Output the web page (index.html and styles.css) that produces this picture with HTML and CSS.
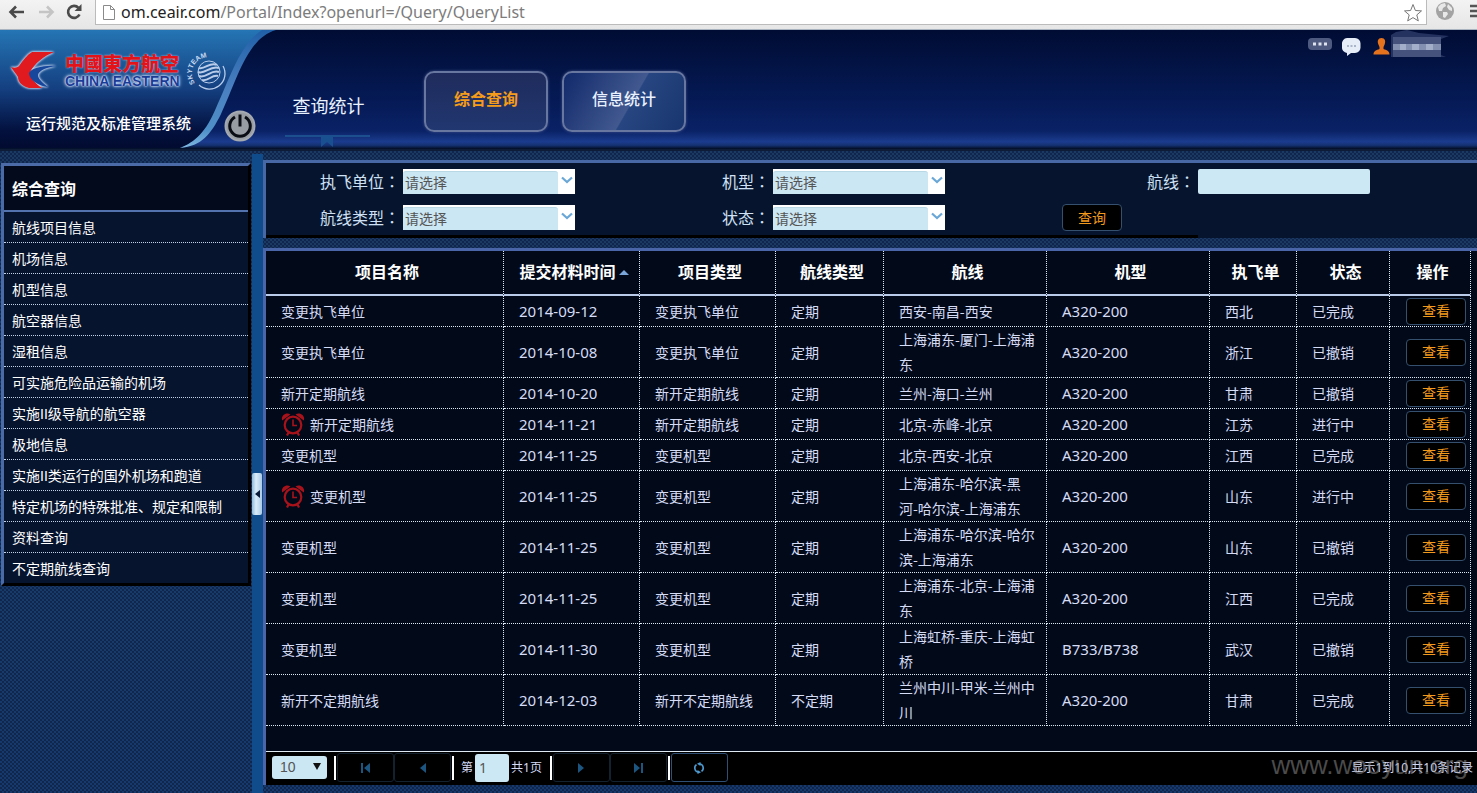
FILE: index.html
```html
<!DOCTYPE html>
<html lang="zh-CN">
<head>
<meta charset="utf-8">
<title>运行规范及标准管理系统</title>
<link rel="stylesheet" href="styles.css">
</head>
<body>
<svg width="0" height="0" class="defs" aria-hidden="true">
  <symbol id="chev" viewBox="0 0 12 8"><path d="M1 1.500l5 4.500 5-4.500" fill="none" stroke="#6aa7d6" stroke-width="2.200"/></symbol>
  <symbol id="clock" viewBox="0 0 24 24"><g fill="none" stroke="#a8121b" stroke-width="2.200"><circle cx="12" cy="13" r="8.300"/><path d="M12 7.500v6h4" stroke-width="1.600"/><path d="M7.500 20.500l-1.500 3M16.500 20.500l1.500 3"/></g><path d="M1.200 8.500C-.5 4.500 4.500-.5 9.500 2.500ZM22.800 8.500C24.500 4.500 19.500-.5 14.500 2.500Z" fill="#a8121b"/></symbol>
</svg>
<div class="chrome">
  <button class="cbtn" aria-label="后退"><svg width="18" height="14" viewBox="0 0 18 14"><path d="M16 7H3M8 1.500L2.500 7 8 12.500" fill="none" stroke="#4a4a4a" stroke-width="2.600"/></svg></button>
  <button class="cbtn" aria-label="前进"><svg width="18" height="14" viewBox="0 0 18 14"><path d="M2 7h13M10 1.500L15.500 7 10 12.500" fill="none" stroke="#c4c4c4" stroke-width="2.600"/></svg></button>
  <button class="cbtn" aria-label="刷新"><svg width="17" height="16" viewBox="0 0 17 16"><path d="M13.500 10.500A6 6 0 1 1 12.500 3.800" fill="none" stroke="#4a4a4a" stroke-width="2.600"/><path d="M15.500 0v7h-7z" fill="#4a4a4a"/></svg></button>
  <div class="address">
    <svg width="12" height="15" viewBox="0 0 12 15"><path d="M.5.5h7l4 4v10H.5zM7.500.5v4h4" fill="#fff" stroke="#8a8a8a"/></svg>
    <span class="url"><span class="host">om.ceair.com</span>/Portal/Index?openurl=/Query/QueryList</span>
    <svg class="star" width="20" height="19" viewBox="0 0 20 19"><path d="M10 1.500l2.400 6 6.100.4-4.700 4 1.500 6L10 14.600 4.700 17.900l1.500-6-4.700-4 6.100-.4z" fill="#fff" stroke="#777"/></svg>
  </div>
  <svg class="globe" width="20" height="20" viewBox="0 0 20 20"><circle cx="10" cy="10" r="9" fill="#a3a3a3"/><path d="M3 6l3-3 4-1 1 3-3 2-1 3-3 0zM13 3l4 4 0 3-3-1-2-3zM8 11l4 0 1 2-3 4-2-1z" fill="#e8e8e8"/></svg>
  <svg class="menu" width="14" height="16" viewBox="0 0 14 16"><path d="M0 3h14M0 8h14M0 13h14" stroke="#555" stroke-width="2.600"/></svg>
</div>

<header class="top">
  <div class="brand">
    <svg class="swoosh" width="280" height="119" viewBox="0 0 280 119">
      <defs>
        <linearGradient id="g1" x1="0" y1="0" x2="0" y2="1"><stop offset="0" stop-color="#2575b4"/><stop offset=".5" stop-color="#143f80"/><stop offset=".85" stop-color="#03113f"/><stop offset="1" stop-color="#020b30"/></linearGradient>
        <linearGradient id="g2" x1="0" y1="0" x2="0" y2="1"><stop offset="0" stop-color="#2060a8"/><stop offset=".5" stop-color="#4a80c0"/><stop offset=".85" stop-color="#4f90c8"/><stop offset="1" stop-color="#7fb8e0"/></linearGradient>
      </defs>
      <path d="M0 0H268C240 8 232 50 218 78C206 102 196 112 180 118H0Z" fill="url(#g1)"/>
      <path d="M276 0H262C240 14 230 48 216 78C206 102 195 112 180 118C202 116 211 104 221 84C237 50 247 8 276 0Z" fill="url(#g2)"/>
    </svg>
    <div class="logo">
      <svg class="bird" width="50" height="44" viewBox="0 0 50 44"><path d="M45 3C35 7 26 14 21 23C21 29 27 35 33 39H20C13 37 9 33 9 28C7 25 4 21 2 18C5 19 8 19 10 17C14 11 18 6 23 3Z" fill="#e01a1e"/><path d="M47 17C35 16 22 19 20 24C20 31 30 37 39 38C34 34 29 30 29 26C30 21 39 18 47 17Z" fill="#17479c"/></svg>
      <div class="logo-text"><div class="cn">中國東方航空</div><div class="en">CHINA EASTERN</div></div>
      <svg class="team" width="44" height="44" viewBox="0 0 44 44" fill="none" stroke="#b9cdea"><path id="arc" d="M9 34A15 15 0 1 1 35 15" stroke="none"/><text class="sky" fill="#c5d6ee" stroke="none"><textPath href="#arc">SKYTEAM</textPath></text><circle cx="23" cy="23" r="11" stroke-width="1"/><path d="M13 19c6 2 11-7 18-3M12 23c7 3 12-7 21-4M13 27c7 3 12-7 20-4M16 31c6 2 10-6 16-4" stroke-width="2"/><path d="M37 17A15.500 15.500 0 0 1 13 36" stroke-width="1.300"/></svg>
    </div>
    <div class="system">运行规范及标准管理系统</div>
    <button class="power" aria-label="退出"><svg width="32" height="32" viewBox="0 0 32 32"><circle cx="16" cy="16" r="15.500" fill="#a5a9b0"/><circle cx="16" cy="16" r="13.500" fill="#989ca3"/><path d="M11 7A10.300 10.300 0 1 0 21 7M16 4.500v12" fill="none" stroke="#0a0d14" stroke-width="3"/></svg></button>
  </div>
  <nav class="nav">
    <a class="section" href="#">查询统计<svg width="12" height="12" viewBox="0 0 12 12"><path d="M0 0h12v11l-6-5-6 5z" fill="#19508f"/></svg></a>
    <a class="tab on" href="#">综合查询</a>
    <a class="tab" href="#">信息统计</a>
  </nav>
  <div class="user">
    <svg width="24" height="12" viewBox="0 0 24 12"><rect width="24" height="12" rx="4" fill="#4e5a80"/><path d="M5 4.500h3v3H5zM10.500 4.500h3v3h-3zM16 4.500h3v3h-3z" fill="#dfe3ee"/></svg>
    <svg width="19" height="18" viewBox="0 0 19 18"><path d="M5 0h8a5.500 5.500 0 0 1 5.500 6v3A5.500 5.500 0 0 1 13 15H9l-4 3v-3A5.500 5.500 0 0 1 0 9V6A5.500 5.500 0 0 1 5 0z" fill="#e6edf6"/><path d="M5 7h2v2H5zM8.500 7h2v2h-2zM12 7h2v2h-2z" fill="#a9b5c8"/></svg>
    <svg width="17" height="17" viewBox="0 0 17 17"><path d="M8.500 0C12 0 13 3 11.600 6.500L10.500 9v2c3 1 6 2 6 5.500H.5C.5 13 3.500 12 6.500 11V9L5.400 6.500C4 3 5 0 8.500 0z" fill="#e5731d"/></svg>
    <svg class="mask" width="60" height="30" viewBox="0 0 60 30"><path d="M0 6L5 3 16 1 28 4 58 7 50 10V26L55 28H0Z" fill="#24325f"/><path d="M2 8h48v20H2z" fill="#45537c"/><path d="M2 15h48v6H2z" fill="#8490b0"/><path d="M9 15h6v6H9zM21 15h7v6h-7zM35 15h7v6h-7z" fill="#a3aec9"/></svg>
  </div>
</header>

<main class="body">
  <aside class="side">
    <h2>综合查询</h2>
    <ul>
      <li><a href="#">航线项目信息</a></li><li><a href="#">机场信息</a></li><li><a href="#">机型信息</a></li><li><a href="#">航空器信息</a></li><li><a href="#">湿租信息</a></li><li><a href="#">可实施危险品运输的机场</a></li><li><a href="#">实施II级导航的航空器</a></li><li><a href="#">极地信息</a></li><li><a href="#">实施II类运行的国外机场和跑道</a></li><li><a href="#">特定机场的特殊批准、规定和限制</a></li><li><a href="#">资料查询</a></li><li><a href="#">不定期航线查询</a></li>
    </ul>
  </aside>
  <div class="split"><button aria-label="收起菜单"><svg width="5" height="8" viewBox="0 0 5 8"><path d="M5 0v8L0 4z" fill="#0a1a38"/></svg></button></div>
  <section class="content">
    <form class="filter">
      <label for="f1">执飞单位<span class="colon" lang="zh-TW">：</span></label>
      <span class="sel"><select id="f1"><option>请选择</option></select><svg width="12" height="8"><use href="#chev"/></svg></span>
      <label for="f2">机型<span class="colon" lang="zh-TW">：</span></label>
      <span class="sel"><select id="f2"><option>请选择</option></select><svg width="12" height="8"><use href="#chev"/></svg></span>
      <label for="f3">航线<span class="colon" lang="zh-TW">：</span></label>
      <input class="line" id="f3" type="text">
      <label for="f4">航线类型<span class="colon" lang="zh-TW">：</span></label>
      <span class="sel"><select id="f4"><option>请选择</option></select><svg width="12" height="8"><use href="#chev"/></svg></span>
      <label for="f5">状态<span class="colon" lang="zh-TW">：</span></label>
      <span class="sel"><select id="f5"><option>请选择</option></select><svg width="12" height="8"><use href="#chev"/></svg></span>
      <button class="btn" type="button">查询</button>
    </form>
    <div class="grid">
      <table>
        <colgroup><col class="c1"><col class="c2"><col class="c2"><col class="c4"><col class="c5"><col class="c5"><col class="c7"><col class="c8"><col class="c9"></colgroup>
        <thead><tr><th>项目名称</th><th>提交材料时间<svg width="10" height="5" viewBox="0 0 10 5"><path d="M0 5l5-5 5 5z" fill="#7aa6da"/></svg></th><th>项目类型</th><th>航线类型</th><th>航线</th><th>机型</th><th>执飞单</th><th>状态</th><th>操作</th></tr></thead>
        <tbody>
          <tr><td>变更执飞单位</td><td class="n">2014-09-12</td><td>变更执飞单位</td><td>定期</td><td>西安-南昌-西安</td><td class="n">A320-200</td><td>西北</td><td>已完成</td><td><button class="btn">查看</button></td></tr>
          <tr><td>变更执飞单位</td><td class="n">2014-10-08</td><td>变更执飞单位</td><td>定期</td><td>上海浦东-厦门-上海浦东</td><td class="n">A320-200</td><td>浙江</td><td>已撤销</td><td><button class="btn">查看</button></td></tr>
          <tr><td>新开定期航线</td><td class="n">2014-10-20</td><td>新开定期航线</td><td>定期</td><td>兰州-海口-兰州</td><td class="n">A320-200</td><td>甘肃</td><td>已撤销</td><td><button class="btn">查看</button></td></tr>
          <tr><td><svg class="clock" width="24" height="24"><use href="#clock"/></svg>新开定期航线</td><td class="n">2014-11-21</td><td>新开定期航线</td><td>定期</td><td>北京-赤峰-北京</td><td class="n">A320-200</td><td>江苏</td><td>进行中</td><td><button class="btn">查看</button></td></tr>
          <tr><td>变更机型</td><td class="n">2014-11-25</td><td>变更机型</td><td>定期</td><td>北京-西安-北京</td><td class="n">A320-200</td><td>江西</td><td>已完成</td><td><button class="btn">查看</button></td></tr>
          <tr><td><svg class="clock" width="24" height="24"><use href="#clock"/></svg>变更机型</td><td class="n">2014-11-25</td><td>变更机型</td><td>定期</td><td>上海浦东-哈尔滨-黑河-哈尔滨-上海浦东</td><td class="n">A320-200</td><td>山东</td><td>进行中</td><td><button class="btn">查看</button></td></tr>
          <tr><td>变更机型</td><td class="n">2014-11-25</td><td>变更机型</td><td>定期</td><td>上海浦东-哈尔滨-哈尔滨-上海浦东</td><td class="n">A320-200</td><td>山东</td><td>已撤销</td><td><button class="btn">查看</button></td></tr>
          <tr><td>变更机型</td><td class="n">2014-11-25</td><td>变更机型</td><td>定期</td><td>上海浦东-北京-上海浦东</td><td class="n">A320-200</td><td>江西</td><td>已完成</td><td><button class="btn">查看</button></td></tr>
          <tr><td>变更机型</td><td class="n">2014-11-30</td><td>变更机型</td><td>定期</td><td>上海虹桥-重庆-上海虹桥</td><td class="n">B733/B738</td><td>武汉</td><td>已撤销</td><td><button class="btn">查看</button></td></tr>
          <tr><td>新开不定期航线</td><td class="n">2014-12-03</td><td>新开不定期航线</td><td>不定期</td><td>兰州中川-甲米-兰州中川</td><td class="n">A320-200</td><td>甘肃</td><td>已完成</td><td><button class="btn">查看</button></td></tr>
        </tbody>
      </table>
      <div class="pager">
        <span class="size"><select aria-label="每页条数"><option>10</option></select><svg width="8" height="7" viewBox="0 0 8 7"><path d="M0 0h8L4 7z" fill="#111"/></svg></span>
        <i class="sep"></i>
        <button aria-label="首页"><svg width="10" height="10" viewBox="0 0 10 10"><path d="M0 0h2v10H0zM9 0v10L3 5z" fill="#1b5580"/></svg></button>
        <button aria-label="上一页"><svg width="10" height="10" viewBox="0 0 10 10"><path d="M8 0v10L2 5z" fill="#1b5580"/></svg></button>
        <i class="sep"></i>
        <label class="page">第<input type="text" value="1" aria-label="页码">共1页</label>
        <i class="sep"></i>
        <button aria-label="下一页"><svg width="10" height="10" viewBox="0 0 10 10"><path d="M2 0v10l6-5z" fill="#1b5580"/></svg></button>
        <button aria-label="末页"><svg width="10" height="10" viewBox="0 0 10 10"><path d="M8 0h2v10H8zM1 0v10l6-5z" fill="#1b5580"/></svg></button>
        <i class="sep"></i>
        <button class="live" aria-label="刷新列表"><svg width="12" height="12" viewBox="0 0 12 12"><g fill="none" stroke="#4d9ad0" stroke-width="1.600"><path d="M3.500 2.600A4.300 4.300 0 0 0 5.500 10.300M8.500 9.400A4.300 4.300 0 0 0 6.500 1.700"/></g><path d="M7.500 0v4L4 1.700zM4.500 12V8L8 10.300z" fill="#4d9ad0"/></svg></button>
        <span class="info">显示1到10,共10条记录</span>
      </div>
    </div>
    <div class="mark">www.wooyun.org</div>
  </section>
</main>
</body>
</html>
```
FILE: styles.css
```css
* { box-sizing: border-box; }
body { margin: 0; min-height: 100vh; display: flex; flex-direction: column; font: 14px/25px "Noto Sans CJK SC", sans-serif; color: #d6dcf5; background: #16345f; overflow: hidden; }
a { color: inherit; text-decoration: none; }
button, input, select { font: inherit; margin: 0; padding: 0; border: 0; background: none; color: inherit; }
svg { flex: none; }
.defs { position: absolute; }

.chrome { height: 30px; display: flex; align-items: flex-start; background: linear-gradient(#f3f3f3, #e6e6e6); border-bottom: 1px solid #a9b3bf; }
.cbtn { width: 29px; height: 24px; padding-left: 8px; display: flex; align-items: center; }
.address { flex: 1; height: 25px; margin: 0 4px 0 8px; padding: 0 3px 0 7px; display: flex; align-items: center; gap: 6px; background: #fff; border: 1px solid #bbb; border-top: 0; }
.url { flex: 1; font: 16px/24px "Noto Sans", sans-serif; color: #7c7c7c; }
.host { color: #222; }
.globe { margin: 1px 15px 0 4px; }
.menu { margin-top: 3px; margin-right: -7px; }

.top { height: 119px; display: flex; position: relative; background: linear-gradient(#000c33, #051a56 60%, #0a2266 85%, #1b3c8e 94%, #14306f 97%, #020c22); }
.brand { width: 285px; position: relative; }
.swoosh { position: absolute; left: 0; top: 0; }
.logo { position: relative; display: flex; align-items: center; gap: 6px; padding: 19px 0 0 9px; height: 62px; }
.bird { filter: drop-shadow(0 0 1px #c9daf2) drop-shadow(0 0 1px #c9daf2); }
.logo-text { width: 117px; font-weight: bold; text-shadow: 0 0 2px #b9cdf0; }
.cn { font-size: 19px; line-height: 20px; font-weight: 900; color: #e3131a; white-space: nowrap; }
.en { margin-top: 1px; font: bold 14px/14px "Liberation Sans", sans-serif; color: #1a3c96; white-space: nowrap; text-shadow: 0 0 1px #dfe9fb, 0 0 2px #c9daf5, 0 0 3px #b9cdf0, 0 0 4px #b9cdf0; }
.team { margin-left: -2px; }
.sky { font: bold 7px "Liberation Sans", sans-serif; }
.system { position: relative; padding: 19px 0 0 26px; font-size: 15px; line-height: 24px; font-weight: 500; color: #fff; }
.power { position: absolute; left: 224px; top: 80px; width: 32px; height: 32px; }
.nav { display: flex; flex: 1; }
.section { width: 85px; height: 107px; padding: 63px 0 0 2px; margin-right: 54px; position: relative; border-bottom: 2px solid #1c4f8e; font-size: 18px; text-align: center; color: #e8f2ff; }
.section svg { position: absolute; left: 36px; top: 106px; }
.tab { width: 124px; height: 61px; margin: 41px 14px 0 0; padding-top: 13px; border: 2px solid #68779f; border-radius: 10px; font-size: 16px; font-weight: 500; text-align: center; color: #eaf1ff; background: linear-gradient(120deg, #12296b, #41598f 55%, #274580 56%, #18356f); box-shadow: 0 0 3px #40518a; }
.tab.on { color: #f59c1a; font-weight: bold; background: linear-gradient(#1f2b5c, #213770); }
.user { display: flex; align-items: flex-start; padding-top: 8px; margin-right: 26px; }
.user svg + svg { margin-left: 10px; }
.user svg + .mask { margin: -9px 0 0 1px; }
.user svg:nth-child(3) { margin-left: 12px; }

.body { flex: 1; display: flex; align-items: stretch; background: radial-gradient(circle at 1px 1px, #10264d 1px, transparent 1px) 0 0 / 4px 4px, radial-gradient(circle at 3px 3px, #10264d 1px, transparent 1px) 0 0 / 4px 4px, linear-gradient(#193a62, #183c68 60%, #16396e); border-top: 2px solid #0e1c38; }
.side { width: 250px; align-self: flex-start; margin: 12px 1px 0 1px; border: 3px solid #000; border-color: #4a6ba8 #000 #000 #4a6ba8; background: #07142e; color: #fff; font-family: "Liberation Sans", "Noto Sans CJK SC", sans-serif; }
.side h2 { margin: 0; height: 46px; padding-left: 8px; font-size: 16px; line-height: 47px; background: #020a1b; border-bottom: 2px solid #5273ae; }
.side ul { margin: 0; padding: 0; list-style: none; }
.side li { height: 31px; padding-left: 8px; line-height: 32px; border-bottom: 1px dotted #c3d2e8; }
.side li:last-child { height: 30px; border: 0; }
.split { width: 11px; margin-top: 3px; display: flex; align-items: center; background: #104c8c; }
.split button { width: 10px; height: 42px; margin-top: 40px; display: flex; align-items: center; justify-content: center; border-radius: 2px; background: linear-gradient(90deg, #8fb9dc, #d9ecf8 40%, #a9cae6); }

.content { flex: 1; min-width: 0; padding-top: 9px; position: relative; }
.filter { position: relative; display: grid; grid-template-columns: 137fr 233fr 137fr 288fr 137fr 279fr; grid-auto-rows: 25px; row-gap: 11px; padding: 6px 0 8px; border: 3px solid #4768a5; border-width: 3px 0 0 3px; background: #07142e; font-size: 16px; color: #cfe1f5; }
.filter::after { content: ""; position: absolute; left: 0; bottom: 0; width: 77%; height: 3px; background: #000; }
.filter label { text-align: right; padding-right: 3px; white-space: nowrap; }
.filter .btn { margin: -1px 0 0 1px; }
.colon { font-family: "Noto Sans CJK TC", sans-serif; }
.sel { position: relative; width: 172px; height: 25px; background: #fff; font-size: 14px; }
.sel select { appearance: none; width: 155px; height: 23px; margin: 2px 0 0; padding: 0 0 2px 2px; border-top: 1px solid #b8d8e6; border-radius: 3px 3px 0 0; background: #cbe7f3; color: #555; line-height: 20px; display: block; }
.sel svg { position: absolute; right: 2px; top: 7px; }
.line { width: 172px; height: 25px; border-radius: 2px; background: #cbe8f4; }
.btn { width: 60px; height: 27px; padding-bottom: 2px; display: block; border: 1px solid #35506f; border-radius: 4px; background: #000; color: #f39a1c; font-size: 14px; line-height: 22px; }

.grid { margin-top: 10px; border: 3px solid #4a66a8; border-width: 3px 0 0 3px; background: #020a1a; }
table { width: calc(100% - 6px); table-layout: fixed; border-collapse: separate; border-spacing: 0; }
.c1 { width: 238px; } .c2 { width: 136px; } .c4 { width: 108px; } .c5 { width: 163px; } .c7 { width: 87px; } .c8 { width: 93px; } .c9 { width: 81px; }
th { height: 45px; padding: 0 0 2px 5px; font-size: 16px; white-space: nowrap; color: #fff; border-right: 1px dotted #dde8f5; border-bottom: 2px solid #b9cbe8; }
th svg { margin: 0 0 3px 3px; }
td { height: 31px; padding: 0 10px 0 15px; border-right: 1px dotted #dde8f5; border-bottom: 1px dotted #dde8f5; }
td:last-child { padding: 0 4px 0 16px; }
.n { font: 15px/25px "Noto Sans", sans-serif; }
.clock { float: left; margin: 0 5px 0 0; }

.pager { height: 34px; margin-top: 25px; display: flex; align-items: center; background: #000; border-top: 1px solid #dfe9f2; font: 12px/28px "Noto Sans", "Noto Sans CJK SC", sans-serif; padding-bottom: 2px; }
.size { position: relative; width: 55px; height: 24px; margin: 0 7px 0 6px; }
.size select { appearance: none; width: 55px; height: 23px; padding-left: 8px; border-radius: 3px; background: #cbe7f3; color: #555; font: 14px/23px "Liberation Sans", sans-serif; display: block; }
.size svg { position: absolute; right: 6px; top: 7px; }
.sep { width: 2px; height: 24px; background: #fff; }
.pager button { width: 57px; height: 29px; display: flex; align-items: center; justify-content: center; border: 1px solid #14222f; border-radius: 3px; }
.pager .live { border-color: #2f4f74; }
.sep + button { margin-left: 1px; }
button + .sep { margin-left: 1px; }
.page { display: flex; gap: 2px; padding: 0 8px 0 7px; }
.page input { width: 34px; height: 28px; padding-left: 4px; border-radius: 3px; background: #cbe8f4; color: #555; font: 14px/28px "Noto Sans", sans-serif; }
.info { margin-left: auto; padding-right: 4px; }
.mark { position: absolute; right: 9px; bottom: 11px; font: 26px/34px "Liberation Sans", sans-serif; color: rgba(150, 150, 150, .5); pointer-events: none; }
```
